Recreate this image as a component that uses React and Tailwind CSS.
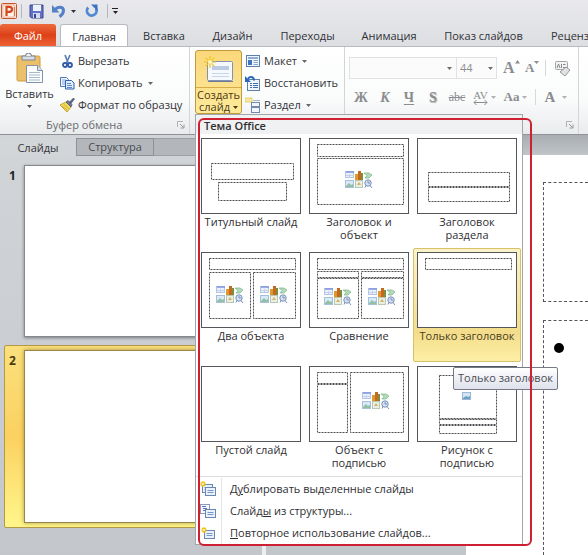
import React from "react";

const FONT = "font-['Open_Sans','Noto_Sans',sans-serif]";

function Caret({ className = "" }) {
  return (
    <svg width="5" height="3" viewBox="0 0 5 3" className={"shrink-0 " + className} aria-hidden="true">
      <path d="M0 0h5L2.5 3z" fill="currentColor" />
    </svg>
  );
}

function Launcher() {
  return (
    <svg width="8" height="8" viewBox="0 0 8 8" aria-hidden="true">
      <path d="M.5 6V.5H6" fill="none" stroke="#b0b2b7" />
      <path d="M3 3l3.500 3.500M7 3.500V7H3.500" fill="none" stroke="#96989e" />
    </svg>
  );
}

/* ---------- title bar icons ---------- */

function AppIcon() {
  return (
    <svg width="16" height="16" viewBox="0 0 16 16" aria-hidden="true">
      <rect x=".5" y=".5" width="15" height="15" rx="1" fill="#f7dccf" stroke="#c9532b" />
      <rect x="2" y="2" width="11" height="12" fill="#fdf3ec" stroke="#e59a78" strokeWidth=".6" />
      <path d="M5.500 13V3.800h3a2.400 2.400 0 0 1 0 5H5.500" fill="none" stroke="#d4471c" strokeWidth="2.200" />
      <path d="M13.500 4v9" stroke="#df7a50" />
    </svg>
  );
}

function SaveIcon() {
  return (
    <svg width="15" height="15" viewBox="0 0 15 15" aria-hidden="true">
      <path d="M1 1h13v13H2.500L1 12.500z" fill="#6472c4" stroke="#39468f" />
      <rect x="4" y="1" width="8" height="6" fill="#eef2fb" />
      <rect x="4" y="9" width="7" height="5" fill="#d5dcf0" />
      <rect x="5" y="10" width="2" height="4" fill="#39468f" />
    </svg>
  );
}

function UndoIcon() {
  return (
    <svg width="14" height="14" viewBox="0 0 14 14" aria-hidden="true">
      <path d="M3 5.500c3-3.500 8.500-3 8.500 1.200 0 2.800-2 4.500-4 6" fill="none" stroke="#5480c8" strokeWidth="3" />
      <path d="M0 1v7.500h7.500z" fill="#5480c8" />
    </svg>
  );
}

function RedoIcon() {
  return (
    <svg width="14" height="14" viewBox="0 0 14 14" aria-hidden="true">
      <path d="M3.200 3.500A4.800 4.800 0 1 0 11 4.500" fill="none" stroke="#5089d4" strokeWidth="2.800" />
      <path d="M6 .5h6.500V7z" fill="#3b72c2" />
    </svg>
  );
}

/* ---------- ribbon icons ---------- */

function PasteIcon() {
  return (
    <svg width="28" height="30" viewBox="0 0 28 30" aria-hidden="true">
      <rect x="1" y="3" width="23" height="25" rx="1.500" fill="#ecc068" stroke="#cf9c3f" />
      <path d="M6 3h13v4H6z" fill="#d9dde6" stroke="#7b8597" />
      <path d="M9.500 3a3 3 0 0 1 6 0" fill="#eef0f5" stroke="#6b7485" />
      <path d="M10.500 12.500h11l5 5v12h-16z" fill="#fbfcfe" stroke="#7f93ad" />
      <path d="M21.500 12.500v5h5" fill="#dbe3ee" stroke="#7f93ad" />
      <path d="M13 19.500h11M13 22h11M13 24.500h11M13 27h11" stroke="#a9b8cc" />
    </svg>
  );
}

function CutIcon() {
  return (
    <svg width="16" height="16" viewBox="0 0 16 16" aria-hidden="true">
      <path d="M6 2l3.500 9M11 2L7 11" stroke="#5f7fb4" strokeWidth="1.700" fill="none" />
      <circle cx="6" cy="12" r="2" fill="none" stroke="#2f5cab" strokeWidth="1.800" />
      <circle cx="11" cy="12" r="2" fill="none" stroke="#2f5cab" strokeWidth="1.800" />
    </svg>
  );
}

function CopyIcon() {
  return (
    <svg width="16" height="16" viewBox="0 0 16 16" aria-hidden="true">
      <path d="M1.500 2.500h6l2 2v7h-8z" fill="#eff5fd" stroke="#4f79b8" />
      <path d="M3 5h4M3 7h4M3 9h4" stroke="#86a6d6" />
      <path d="M6.500 5.500h6l2.500 2.500v6h-8.500z" fill="#e3eefb" stroke="#2f5fa8" />
      <path d="M8 8.500h4M8 10.500h5M8 12.500h5" stroke="#5c87c6" />
    </svg>
  );
}

function BrushIcon() {
  return (
    <svg width="16" height="16" viewBox="0 0 16 16" aria-hidden="true">
      <path d="M1 8l6-3 5 5-4 5z" fill="#f2d95b" stroke="#c8a52e" />
      <path d="M3 9l5 4M5 7.500l4.500 4" stroke="#c8a52e" strokeWidth=".8" />
      <path d="M7 5l2-1.500 4 4L12 10z" fill="#6c7896" stroke="#4a5474" strokeWidth=".8" />
      <path d="M10.500 5l4-4 1 1-3.500 4.500z" fill="#596687" stroke="#3f4966" strokeWidth=".6" />
    </svg>
  );
}

function Spark({ x, y, r }) {
  return (
    <g transform={`translate(${x} ${y})`} stroke="#f0c419" strokeWidth="1.200">
      <path d={`M0 ${-r}V${r}M${-r} 0H${r}M${-r * 0.7} ${-r * 0.7}L${r * 0.7} ${r * 0.7}M${r * 0.7} ${-r * 0.7}L${-r * 0.7} ${r * 0.7}`} />
      <circle r={r * 0.35} fill="#fff6c0" stroke="none" />
    </g>
  );
}

function NewSlideIcon() {
  return (
    <svg width="32" height="28" viewBox="0 0 32 28" aria-hidden="true">
      <rect x="4.500" y="6.500" width="25" height="19" rx="1" fill="#f5f8fd" stroke="#8292b0" />
      <path d="M5 26.500h25" stroke="#6d7b97" />
      <rect x="9" y="11" width="17" height="4" fill="#bccbe4" />
      <path d="M9 18.500h17M9 21.500h17" stroke="#c9d5e8" />
      <Spark x={7} y={7} r={6} />
    </svg>
  );
}

function LayoutIcon() {
  return (
    <svg width="16" height="16" viewBox="0 0 16 16" aria-hidden="true">
      <rect x="1.500" y="2.500" width="13" height="11" fill="#f2f7fd" stroke="#5d7fae" />
      <path d="M3 5h10" stroke="#6d93c8" strokeWidth="1.500" />
      <rect x="3" y="7" width="4" height="5" fill="#4474bb" />
      <path d="M8.500 7.500H13M8.500 9.500H13M8.500 11.500H13" stroke="#86a4cc" />
    </svg>
  );
}

function ResetIcon() {
  return (
    <svg width="16" height="16" viewBox="0 0 16 16" aria-hidden="true">
      <rect x="2.500" y="4.500" width="12" height="11" fill="#f2f7fd" stroke="#5d7fae" />
      <path d="M5 8.500h2M8 8.500h5M5 10.500h2M8 10.500h5M5 12.500h2M8 12.500h5" stroke="#3f6db0" />
      <path d="M3 4c1-3 6-3 6 1.500" fill="none" stroke="#2d66bb" strokeWidth="2" />
      <path d="M0 1v6h6z" fill="#2d66bb" />
    </svg>
  );
}

function SectionIcon() {
  return (
    <svg width="16" height="16" viewBox="0 0 16 16" aria-hidden="true">
      <rect x="0" y="1" width="7" height="4" fill="#f6e9a4" stroke="#dcc454" strokeWidth=".7" />
      <path d="M8 3.500h7" stroke="#a8b2c2" />
      <rect x="6.500" y="5.500" width="8" height="4" fill="#f2f7fd" stroke="#7089ad" />
      <rect x="6.500" y="10.500" width="8" height="5" fill="#f2f7fd" stroke="#7089ad" />
    </svg>
  );
}

function ClearIcon() {
  return (
    <svg width="17" height="17" viewBox="0 0 17 17" aria-hidden="true">
      <rect x="1.500" y="1.500" width="12" height="8" rx="1" fill="#f3f3f4" stroke="#a3a5a9" />
      <path d="M3 8l1.500-4L6 8M7.500 4v4M9 4.500h2.500M9 7.500h2.500" stroke="#85878b" fill="none" />
      <path d="M6 12l6-5 4 3-5 6z" fill="#e2e2e4" stroke="#96989c" />
    </svg>
  );
}

/* ---------- dropdown menu icons ---------- */

function MiniSlide({ x, y, w = 10, h = 8 }) {
  return (
    <g transform={`translate(${x} ${y})`}>
      <rect x=".5" y=".5" width={w} height={h} fill="#eaf1fb" stroke="#6a86b3" />
      <path d={`M2.500 3.500h${w - 4}M2.500 5.500h${w - 4}`} stroke="#7796c6" />
    </g>
  );
}

function DuplicateIcon() {
  return (
    <svg width="17" height="16" viewBox="0 0 17 16" aria-hidden="true">
      <MiniSlide x={2} y={3} />
      <MiniSlide x={5} y={6} />
      <Spark x={3} y={3} r={3} />
    </svg>
  );
}

function OutlineIcon() {
  return (
    <svg width="17" height="16" viewBox="0 0 17 16" aria-hidden="true">
      <rect x=".5" y="1.500" width="9" height="9" fill="#f7f9fd" stroke="#8e9bb6" />
      <path d="M2 3.500h4M3 5.500h4M3 7.500h4" stroke="#5472b5" />
      <MiniSlide x={5} y={6} />
    </svg>
  );
}

function ReuseIcon() {
  return (
    <svg width="17" height="16" viewBox="0 0 17 16" aria-hidden="true">
      <MiniSlide x={4} y={5} />
      <Spark x={4} y={5} r={3} />
    </svg>
  );
}

/* ---------- layout thumbnails ---------- */

function Box({ x1, y1, x2, y2 }) {
  return (
    <rect
      x={x1 + 0.5}
      y={y1 + 0.5}
      width={x2 - x1}
      height={y2 - y1}
      fill="none"
      stroke="#4c4c50"
      strokeDasharray="2 1"
    />
  );
}

function ContentIcons({ x, y }) {
  return (
    <g transform={`translate(${x} ${y})`}>
      <rect x=".5" y="1.500" width="8" height="6" fill="#e9f0fb" stroke="#b3c5e6" />
      <path d="M1 2h8" stroke="#8094dc" strokeWidth="1.500" />
      <path d="M4.500 4v3M1 5.500h8" stroke="#c4d2ec" />
      <rect x="10" y="4" width="4" height="6" fill="#e0982c" />
      <rect x="13" y="1" width="3" height="9" fill="#c4691f" />
      <rect x="16" y="3" width="2" height="7" fill="#7a8f3c" />
      <path d="M19 3h5l3 2-3 3h-4l2-2.500z" fill="#b4dab9" stroke="#78b486" strokeWidth=".7" />
      <rect x=".5" y="10.500" width="8" height="7" fill="#d8eaf7" stroke="#a6c0da" />
      <path d="M1 16l3-3 2 2 2-1v3H1z" fill="#94bea6" />
      <rect x="10.500" y="10.500" width="7" height="7" fill="#e8efe4" stroke="#b8c8b2" />
      <path d="M12 15l2-3 2 3z" fill="#d5b264" />
      <circle cx="23" cy="13" r="3.200" fill="#d5e2f3" stroke="#7890b8" />
      <path d="M21 15.500l-1 2M25 15.500l2 2.500M22 12h2v2" stroke="#7890b8" fill="none" />
    </g>
  );
}

const LAYOUTS = [
  { name: "Титульный слайд", boxes: [[10, 25, 92, 41], [17, 44, 85, 62]] },
  { name: "Заголовок и объект", wrap: true, boxes: [[8, 6, 94, 18], [8, 20, 94, 66]], icons: [[36, 32]] },
  { name: "Заголовок раздела", wrap: true, boxes: [[11, 34, 92, 48], [11, 49, 92, 63]] },
  { name: "Два объекта", boxes: [[8, 6, 94, 17], [8, 20, 49, 66], [52, 20, 94, 66]], icons: [[15, 33], [59, 33]] },
  {
    name: "Сравнение",
    boxes: [[8, 6, 94, 17], [8, 19, 49, 25], [52, 19, 94, 25], [8, 26, 49, 66], [52, 26, 94, 66]],
    icons: [[15, 35], [59, 35]],
  },
  { name: "Только заголовок", boxes: [[8, 6, 94, 17]], selected: true },
  { name: "Пустой слайд", boxes: [] },
  { name: "Объект с подписью", wrap: true, boxes: [[8, 6, 38, 17], [8, 18, 38, 66], [41, 6, 94, 66]], icons: [[53, 25]] },
  { name: "Рисунок с подписью", wrap: true, boxes: [[22, 9, 79, 52], [22, 53, 79, 58], [22, 59, 79, 67]], picture: true },
];

function LayoutTile({ item }) {
  return (
    <button
      className={
        "flex h-[114px] flex-col items-center border pt-[3px] leading-[13px] " +
        (item.selected
          ? "rounded-[2px] border-[#d9c169] bg-gradient-to-b from-[#fbf3c8] via-[#f3dd8b] via-75% to-[#fdf0a6] text-[#4a3d20]"
          : "border-transparent")
      }
    >
      <svg width="100" height="76" viewBox="0 0 100 76" aria-hidden="true" className="shrink-0">
        <rect x=".5" y=".5" width="99" height="75" fill="#fff" stroke="#55565c" />
        {item.boxes.map((b, i) => (
          <Box key={i} x1={b[0]} y1={b[1]} x2={b[2]} y2={b[3]} />
        ))}
        {(item.icons || []).map((p, i) => (
          <ContentIcons key={i} x={p[0]} y={p[1]} />
        ))}
        {item.picture && (
          <g>
            <rect x="45.500" y="26.500" width="8" height="7" fill="#d3e5f5" stroke="#9ab9d9" />
            <path d="M46 32l3-2 2 1 2-1v3h-7z" fill="#6fa0c4" />
          </g>
        )}
      </svg>
      <span className={"mt-px " + (item.wrap ? "w-[76px]" : "whitespace-nowrap")}>{item.name}</span>
    </button>
  );
}

function MenuItem({ icon, children }) {
  return (
    <button className="flex h-[22px] w-full items-center text-left">
      <span className="flex h-full w-[26px] items-center justify-center border-r border-[#e3e4e6]">{icon}</span>
      <span className="whitespace-nowrap pl-2">{children}</span>
    </button>
  );
}

function NewSlideMenu() {
  return (
    <div className="absolute left-0 top-full z-20 w-[328px] border border-[#a3a6ab] bg-white text-[11px] text-[#2f2f33]">
      <div className="h-[19px] bg-[#f0f1f2] pl-[8px] font-semibold leading-[22px]">Тема Office</div>
      <div className="ml-px grid w-[324px] grid-cols-3">
        {LAYOUTS.map((l) => (
          <LayoutTile key={l.name} item={l} />
        ))}
      </div>
      <div className="border-t border-[#dcdde0] pt-px">
        <MenuItem icon={<DuplicateIcon />}>Д<u>у</u>блировать выделенные слайды</MenuItem>
        <MenuItem icon={<OutlineIcon />}>Слайд<u>ы</u> из структуры...</MenuItem>
        <MenuItem icon={<ReuseIcon />}><u>П</u>овторное использование слайдов...</MenuItem>
      </div>
      <div
        role="tooltip"
        className="absolute left-[257px] top-[252px] flex h-[23px] w-[105px] items-center justify-center whitespace-nowrap rounded-[2px] border border-[#767a86] bg-gradient-to-b from-white to-[#dfe1ec] text-[#4c4c53]"
      >
        Только заголовок
      </div>
      <div className="pointer-events-none absolute -right-[10px] bottom-[-2px] left-[2px] top-[3px] rounded-[6px] border-2 border-[#cf1f33]" />
    </div>
  );
}

/* ---------- window parts ---------- */

function QuickAccess() {
  return (
    <div className="flex h-[24px] items-center pb-[2px] pl-px">
      <AppIcon />
      <span className="ml-1 h-[14px] w-px bg-[#b4b6ba]" />
      <button className="ml-[7px]" aria-label="Сохранить"><SaveIcon /></button>
      <button className="ml-2 flex items-center gap-[5px]" aria-label="Отменить"><UndoIcon /><Caret className="text-[#333]" /></button>
      <button className="ml-[9px]" aria-label="Повторить"><RedoIcon /></button>
      <span className="ml-2 h-[14px] w-px bg-[#b4b6ba]" />
      <button className="ml-1 flex flex-col items-center gap-[2px] text-[#222]" aria-label="Настройка панели">
        <span className="h-px w-[6px] bg-[#222]" />
        <Caret />
      </button>
    </div>
  );
}

function Tabs() {
  const tab = "h-[22px] shrink-0 text-center leading-[23px]";
  return (
    <nav className="flex overflow-hidden whitespace-nowrap border-b border-[#b7babf] text-[11px] text-[#303135]">
      <button className={tab + " w-[56px] rounded-t-[3px] bg-gradient-to-b from-[#ee6a3c] via-[#dd4016] to-[#ee6236] text-white"}>Файл</button>
      <button className={tab + " ml-[4px] mr-[2px] w-[68px] rounded-t-[3px] border border-b-0 border-[#b7babf] bg-white"}>Главная</button>
      <button className={tab + " w-[68px]"}>Вставка</button>
      <button className={tab + " w-[69px]"}>Дизайн</button>
      <button className={tab + " w-[81px]"}>Переходы</button>
      <button className={tab + " w-[82px]"}>Анимация</button>
      <button className={tab + " w-[107px]"}>Показ слайдов</button>
      <button className={tab + " px-[14px]"}>Рецензирование</button>
    </nav>
  );
}

function SmallButton({ icon, caret, children }) {
  return (
    <button className="flex h-[22px] items-center whitespace-nowrap">
      {icon}
      <span className="ml-[3px]">{children}</span>
      {caret && <Caret className="ml-[5px] text-[#66686d]" />}
    </button>
  );
}

function FontGroup() {
  const b = "flex h-[22px] w-[24px] items-center justify-center";
  return (
    <section className="flex w-[234px] shrink-0 flex-col border-r border-[#d3d5d8] pl-[4px] font-['Liberation_Serif','DejaVu_Serif',serif] text-[#8b8c90]">
      <div className="mt-[10px] flex h-[22px] items-center">
        <label className="relative flex h-full items-center">
          <select disabled aria-label="Шрифт" className="h-full w-[108px] appearance-none border border-[#e1e2e4] bg-[#fbfbfb] opacity-100">
            <option></option>
          </select>
          <Caret className="absolute right-[5px] text-[#6b6c70]" />
        </label>
        <label className="relative flex h-full items-center">
          <select disabled aria-label="Размер" className={"-ml-px h-full w-[41px] appearance-none border border-[#e1e2e4] bg-[#fbfbfb] pl-[3px] text-[11px] text-[#8b8c90] opacity-100 " + FONT}>
            <option>44</option>
          </select>
          <Caret className="absolute right-[4px] text-[#6b6c70]" />
        </label>
        <button className="ml-[6px] flex w-[16px] items-center text-[16px] font-bold" aria-label="Увеличить размер">
          A<svg width="5" height="4" viewBox="0 0 5 4" className="mb-3 shrink-0"><path d="M0 3.500L2.500 0 5 3.500z" fill="currentColor" /></svg>
        </button>
        <button className="ml-[6px] flex w-[15px] items-center text-[13px] font-bold" aria-label="Уменьшить размер">
          A<Caret className="mb-3" />
        </button>
        <span className="ml-[5px] h-[16px] w-px bg-[#d8d9db]" />
        <button className="ml-[8px]" aria-label="Очистить формат"><ClearIcon /></button>
      </div>
      <div className="mt-[7px] flex h-[22px] items-center text-[14px]">
        <button className={b + " font-bold"}>Ж</button>
        <button className={b + " font-bold italic"}>К</button>
        <button className={b + " font-bold underline underline-offset-2"}>Ч</button>
        <button className={b + " font-bold [text-shadow:1px_1px_1px_#aaa]"}>S</button>
        <button className={b + " text-[12px] line-through"}>abc</button>
        <button className="flex h-[22px] w-[31px] items-center justify-center gap-[3px] text-[11px]">
          <span className="flex flex-col items-center leading-[10px]">
            AV
            <svg width="15" height="5" viewBox="0 0 15 5"><path d="M1 2.500h13M3.500 0L1 2.500 3.500 5M11.500 0L14 2.500 11.500 5" stroke="currentColor" fill="none" /></svg>
          </span>
          <Caret className="text-[#b0b1b5]" />
        </button>
        <button className="flex h-[22px] w-[31px] items-center justify-center gap-[3px] text-[13px] font-bold">Aa<Caret className="text-[#b0b1b5]" /></button>
        <span className="ml-[4px] h-[16px] w-px bg-[#d8d9db]" />
        <button className="flex h-[22px] w-[40px] items-center justify-center gap-[7px] text-[15px] font-bold">A<Caret className="text-[#b0b1b5]" /></button>
      </div>
      <div className="mt-auto flex justify-end pb-[5px] pr-[4px]"><Launcher /></div>
    </section>
  );
}

function Ribbon() {
  return (
    <div className="flex h-[88px] border-b border-[#8f9297] bg-gradient-to-b from-white via-[#fafbfb] via-60% to-[#e9ebed] text-[11px] text-[#333438]">
      <section className="flex w-[190px] shrink-0 flex-col border-r border-[#d3d5d8]">
        <div className="mt-[3px] flex h-[66px]">
          <button className="flex w-[58px] flex-col items-center pl-px pt-[3px]">
            <PasteIcon />
            <span className="leading-[21px]">Вставить</span>
            <Caret className="mt-px text-[#55575c]" />
          </button>
          <div className="pl-px">
            <SmallButton icon={<CutIcon />}>Вырезать</SmallButton>
            <SmallButton icon={<CopyIcon />} caret>Копировать</SmallButton>
            <SmallButton icon={<BrushIcon />}>Формат по образцу</SmallButton>
          </div>
        </div>
        <div className="flex h-[18px] items-center pl-[46px] pr-[4px] text-[#6a6c71]">
          <span className="mr-auto">Буфер обмена</span>
          <Launcher />
        </div>
      </section>
      <section className="w-[155px] shrink-0 border-r border-[#d3d5d8] pl-[5px] pt-[3px]">
        <div className="flex">
          <div className="relative h-[64px] w-[47px] shrink-0">
            <button className="flex h-full w-full flex-col items-center rounded-[3px] border border-[#c19a3c] bg-gradient-to-b from-[#fbd879] via-[#fce08c] to-[#fdea98] text-[#4c3a14]">
              <span className="flex h-[37px] w-full items-center justify-center border-b border-[#d9ab45]"><NewSlideIcon /></span>
              <span className="leading-[13px]">Создать</span>
              <span className="flex items-center gap-[3px] leading-[12px]">слайд<Caret /></span>
            </button>
            <NewSlideMenu />
          </div>
          <div className="pl-[3px]">
            <SmallButton icon={<LayoutIcon />} caret>Макет</SmallButton>
            <SmallButton icon={<ResetIcon />}>Восстановить</SmallButton>
            <SmallButton icon={<SectionIcon />} caret>Раздел</SmallButton>
          </div>
        </div>
      </section>
      <FontGroup />
    </div>
  );
}

function SlidesPane() {
  return (
    <aside className="w-[262px] shrink-0 bg-gradient-to-b from-[#d2d5d8] to-[#c3c6cb]">
      <div className="flex h-[21px] pt-[3px] text-[11px] leading-[17px]">
        <button className="w-[76px] rounded-tr-[2px] bg-[#d3d6d9] text-[#333438]">Слайды</button>
        <button className="w-[78px] border border-[#8e9297] bg-[#b3b7bb] leading-[16px] text-[#4a4c51]">Структура</button>
        <span className="flex-1 border border-l-0 border-[#9da1a6] bg-[#b3b7bb]" />
      </div>
      <div className="flex h-[189px] pl-[4px] pt-[9px]">
        <span className="w-[20px] pl-[5px] pt-[2px] text-[12px] font-bold text-[#222]">1</span>
        <div className="h-[172px] w-[229px] border border-[#85888d] bg-white shadow-[0_1px_3px_rgba(0,0,0,0.4)]" />
      </div>
      <div className="mx-[4px] flex h-[183px] rounded-[2px] border border-[#b59a45] bg-gradient-to-b from-[#fbe07c] via-[#fbd160] to-[#fff68a] pt-[4px]">
        <span className="w-[19px] pl-[4px] pt-[2px] text-[12px] font-bold text-[#4a3a10]">2</span>
        <div className="h-[173px] w-[229px] border border-[#97864a] bg-white shadow-[0_0_4px_rgba(90,70,0,0.5)]" />
      </div>
    </aside>
  );
}

function Editor() {
  return (
    <main className="flex min-w-0 flex-1 flex-col border-l-4 border-[#eceef0] bg-gradient-to-b from-[#a9adb2] to-[#c1c6ca] to-5%">
      <div className="ml-[200px] mt-[20px] flex flex-1 flex-col overflow-hidden bg-white pl-[77px] pt-[27px]">
        <div className="h-[120px] border border-r-0 border-dashed border-[#55565a]" />
        <div className="mt-[18px] flex-1 border border-b-0 border-r-0 border-dashed border-[#55565a] pl-[10px] pt-[22px]">
          <div className="size-[10px] rounded-full bg-black" />
        </div>
      </div>
    </main>
  );
}

export default function App() {
  return (
    <div className={"flex h-screen flex-col overflow-hidden bg-[#dfe1e4] " + FONT}>
      <header className="bg-gradient-to-b from-[#e9e9ed] to-[#dcdee2]">
        <QuickAccess />
        <Tabs />
      </header>
      <Ribbon />
      <div className="flex min-h-0 flex-1">
        <SlidesPane />
        <Editor />
      </div>
    </div>
  );
}
